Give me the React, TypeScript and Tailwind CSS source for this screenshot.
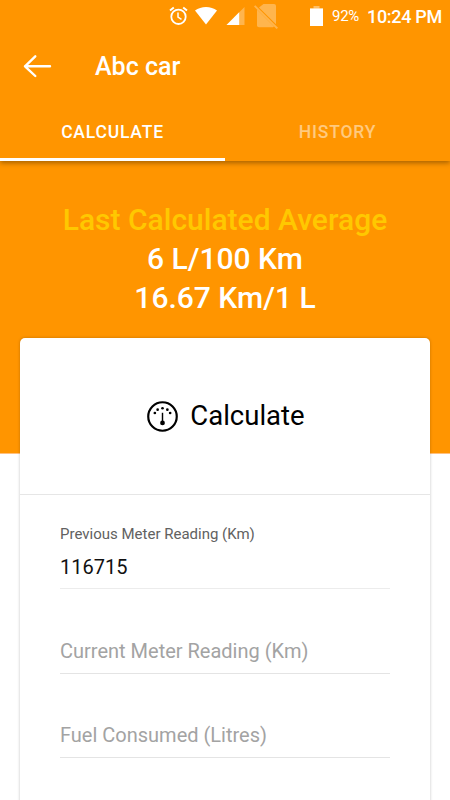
type FieldProps = {
  label: string
  value?: string
}

function StatusBar() {
  return (
    <div className="flex h-8 items-center">
      <svg className="ml-[169px]" width="19" height="20" viewBox="0 0 19 20" fill="none" stroke="white">
        <circle cx="9.5" cy="10.8" r="7.2" strokeWidth="1.8" />
        <path d="M1 4.6 4.8 1.4M18 4.6 14.2 1.4" strokeWidth="1.9" />
        <path d="M9 6.5V11.2L12.5 13.3" strokeWidth="1.5" />
      </svg>
      <svg className="ml-[7px]" width="22" height="18" viewBox="0 0 22 18" fill="white">
        <path d="M0 3.6C6-1.2 16-1.2 22 3.6L11 17.5Z" />
      </svg>
      <svg className="ml-[9px]" width="19" height="18" viewBox="0 0 19 18" fill="white">
        <path d="M18.5 0V18H.5Z" fillOpacity=".3" />
        <path d="M13.2 5.2V18H.5Z" />
      </svg>
      <svg className="ml-[9px]" width="24" height="26" viewBox="0 0 24 26" fill="white">
        <g opacity=".3">
          <path d="M9.5 1H20a2 2 0 0 1 2 2V21.2L5 4.6Z" />
          <path d="M3 6.5 20 23.6 19 24.3H5a2 2 0 0 1-2-2Z" />
          <path d="M1.3 2.2 24 24.8 22.6 26 0 3.6Z" />
        </g>
      </svg>
      <svg className="ml-[32px]" width="13" height="20" viewBox="0 0 13 20" fill="white">
        <path d="M3.5 0H9.5V2.4H13V6H0V2.4H3.5Z" fillOpacity=".4" />
        <rect y="2.5" width="13" height="17.5" />
      </svg>
      <span className="ml-[9px] w-[35px] text-[15px] tracking-[-0.3px]">92%</span>
      <span className="text-[18px] font-medium tracking-[-0.3px] whitespace-nowrap">10:24 PM</span>
    </div>
  )
}

function Gauge() {
  return (
    <svg width="31" height="31" viewBox="0 0 30 30" fill="none" stroke="black">
      <circle cx="15" cy="15" r="13.8" strokeWidth="2.1" />
      <path d="M15 11.4V22" strokeWidth="1.4" />
      <circle cx="15" cy="21.2" r="2.3" fill="black" stroke="none" />
      <g fill="black" stroke="none">
        <circle cx="7.6" cy="11.6" r="1.3" />
        <circle cx="10.3" cy="8.4" r="1.3" />
        <circle cx="15" cy="7" r="1.3" />
        <circle cx="19.7" cy="8.4" r="1.3" />
        <circle cx="22.4" cy="11.6" r="1.3" />
      </g>
    </svg>
  )
}

function Field({ label, value }: FieldProps) {
  if (value) {
    return (
      <div className="h-[94px] border-b border-[#ececec] pt-[29px]">
        <p className="text-[15px] leading-5 text-[#616161]">{label}</p>
        <p className="mt-[11px] text-[20px] leading-6 text-[#111]">{value}</p>
      </div>
    )
  }
  return (
    <div className="h-[84.5px] border-b border-[#e4e4e4] pt-[49.5px]">
      <p className="text-[20px] leading-6 text-[#a3a3a3]">{label}</p>
    </div>
  )
}

export default function App() {
  return (
    <div className="h-[800px] w-[450px] overflow-hidden bg-white font-[Roboto,sans-serif]">
      <header className="relative h-[161px] bg-[#ff9500] text-white shadow-[0_2px_5px_rgba(0,0,0,0.35)]">
        <StatusBar />
        <div className="flex h-[68px] items-center pl-[23px]">
          <svg width="29" height="24" viewBox="0 0 29 24" fill="none" stroke="white" strokeWidth="2.4" strokeLinecap="round" strokeLinejoin="round">
            <path d="M27 12.3H2M12.3 2.3 2 12.3 12.3 22" />
          </svg>
          <h1 className="ml-[43px] pt-px text-[25px] font-medium">Abc car</h1>
        </div>
        <nav className="flex h-[61px] text-center text-[17.5px] leading-[64px] font-medium tracking-[0.8px]">
          <div className="w-[225px] border-b-[3px] border-white">CALCULATE</div>
          <div className="w-[225px] text-white/50">HISTORY</div>
        </nav>
      </header>

      <section className="h-[293px] border-b border-[#ffc080] bg-[#ff9500] pt-[39px] text-center text-[30px] leading-[39px] font-medium text-white">
        <h2 className="text-[#ffc800]">Last Calculated Average</h2>
        <p>6 L/100 Km</p>
        <p>16.67 Km/1 L</p>
      </section>

      <main className="relative mx-5 -mt-[116px] h-[500px] rounded-[5px] bg-white shadow-[0_0_3px_rgba(0,0,0,0.25)]">
        <div className="flex h-[157px] items-center justify-center gap-[12px] border-b border-[#e6e6e6] pl-[2px]">
          <Gauge />
          <span className="text-[27.5px] text-black">Calculate</span>
        </div>
        <div className="px-10">
          <Field label="Previous Meter Reading (Km)" value="116715" />
          <Field label="Current Meter Reading (Km)" />
          <Field label="Fuel Consumed (Litres)" />
        </div>
      </main>
    </div>
  )
}
